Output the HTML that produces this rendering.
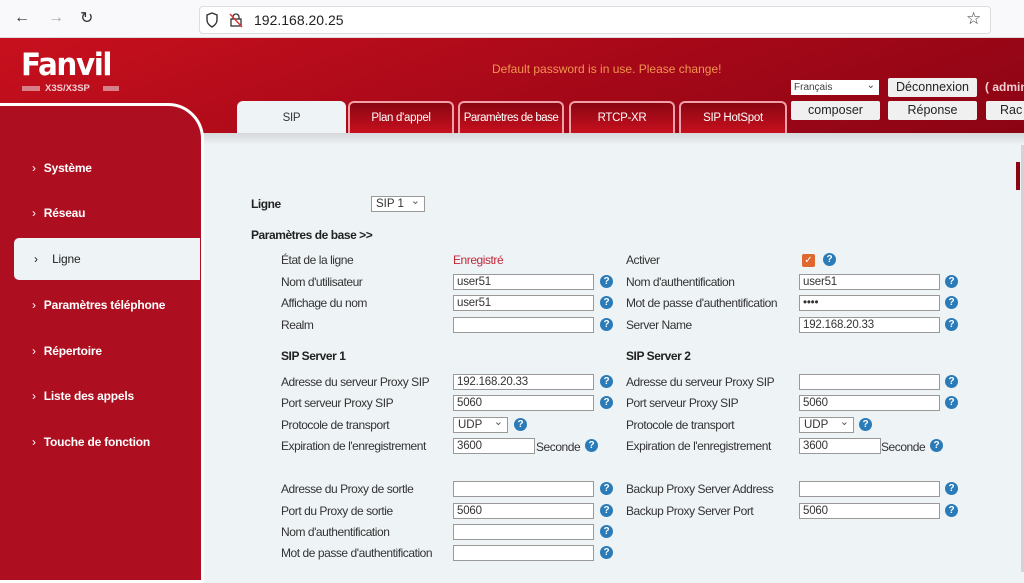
<!DOCTYPE html>
<html><head><meta charset="utf-8"><style>
*{margin:0;padding:0;box-sizing:border-box}
body{width:1024px;height:572px;overflow:hidden;position:relative;font-family:"Liberation Sans",sans-serif;background:#eef3f6}
.a{position:absolute;white-space:nowrap}
.l{position:absolute;font-size:12px;color:#333;letter-spacing:-0.45px;white-space:nowrap}
.in{position:absolute;height:16px;width:141px;background:#fff;border:1px solid #999;font-size:11.5px;color:#333;padding-left:3px;line-height:15px;letter-spacing:-0.2px}
.h{position:absolute;width:13px;height:13px;border-radius:50%;background:#2a7bb8;color:#fff;font-size:10px;font-weight:bold;text-align:center;line-height:13px}
.sel{position:absolute;height:16px;background:#fff;border:1px solid #999;font-size:11.5px;color:#333;padding-left:4px;line-height:14px}
.sel:after{content:"⌄";position:absolute;right:4px;top:-3px;font-size:11px;color:#555}
.tab{position:absolute;top:101px;height:32px;border:2px solid #f0a0a8;border-bottom:none;border-radius:6px 6px 0 0;background:linear-gradient(#8a0612,#c8101e);color:#fff;font-size:11.5px;text-align:center;line-height:30px;letter-spacing:-0.3px;white-space:nowrap;overflow:hidden}
.btn{position:absolute;height:19px;background:#f0f0f0;border-radius:2px;font-size:12.5px;color:#222;text-align:center;line-height:19px}
.nav{position:absolute;left:32px;color:#fff;font-size:12px;font-weight:bold;letter-spacing:-0.2px}
.nav b{font-weight:normal;margin-right:8px}
.b{font-weight:bold;color:#222}
</style></head><body>
<!-- browser bar -->
<div class="a" style="left:0;top:0;width:1024px;height:38px;background:#f9f9fb;border-bottom:1px solid #ddd"></div>
<div class="a" style="left:14px;top:9px;font-size:16px;color:#333">←</div>
<div class="a" style="left:48px;top:9px;font-size:16px;color:#aaa">→</div>
<div class="a" style="left:80px;top:8px;font-size:16px;color:#333">↻</div>
<div class="a" style="left:199px;top:6px;width:792px;height:28px;background:#fff;border:1px solid #ddd;border-radius:4px"></div>
<svg class="a" style="left:205px;top:12px" width="14" height="16" viewBox="0 0 14 16"><path d="M7 1L2 3v5c0 3 2.5 5.5 5 7 2.5-1.5 5-4 5-7V3z" fill="none" stroke="#333" stroke-width="1.4"/></svg>
<svg class="a" style="left:229px;top:12px" width="14" height="16" viewBox="0 0 14 16"><rect x="2" y="7" width="10" height="7" fill="none" stroke="#333" stroke-width="1.3"/><path d="M4 7V5a3 3 0 016 0v2" fill="none" stroke="#333" stroke-width="1.3"/><path d="M1 2l12 13" stroke="#d33" stroke-width="1.4"/></svg>
<div class="a" style="left:254px;top:12px;font-size:14px;color:#222">192.168.20.25</div>
<div class="a" style="left:966px;top:9px;font-size:17px;color:#333">☆</div>
<!-- header -->
<div class="a" style="left:0;top:38px;width:1024px;height:107px;background:linear-gradient(160deg,#c8101e 0%,#a50818 55%,#8a0414 100%)"></div>
<div class="a" style="left:21px;top:47px;font-size:31px;font-weight:bold;color:#fff;letter-spacing:-1.5px;font-family:'DejaVu Sans',sans-serif;transform:scaleX(0.95);transform-origin:left">Fanvil</div>
<div class="a" style="left:45px;top:83px;font-size:9.5px;font-weight:bold;color:#f2d0d4">X3S/X3SP</div>
<div class="a" style="left:22px;top:86px;width:18px;height:5px;background:#d67f88"></div>
<div class="a" style="left:103px;top:86px;width:16px;height:5px;background:#d67f88"></div>
<div class="a" style="left:492px;top:62px;font-size:12px;color:#f29450">Default password is in use. Please change!</div>
<div class="a" style="left:791px;top:80px;width:88px;height:15px;background:#fff;font-size:10px;color:#444;padding-left:3px;line-height:15px">Français<span style="position:absolute;right:4px;top:-2px">⌄</span></div>
<div class="btn" style="left:888px;top:78px;width:89px">Déconnexion</div>
<div class="a" style="left:985px;top:80px;font-size:12px;color:#f0d0d4;font-weight:bold">( admin</div>
<div class="btn" style="left:791px;top:101px;width:89px">composer</div>
<div class="btn" style="left:888px;top:101px;width:89px">Réponse</div>
<div class="btn" style="left:986px;top:101px;width:50px;text-align:left;padding-left:14px">Rac</div>
<div class="tab" style="left:237px;width:109px;background:#eef3f6;color:#333;border-color:#eef3f6">SIP</div>
<div class="tab" style="left:348px;width:106px">Plan d'appel</div>
<div class="tab" style="left:458px;width:106px;letter-spacing:-0.5px">Paramètres de base</div>
<div class="tab" style="left:569px;width:106px">RTCP-XR</div>
<div class="tab" style="left:679px;width:108px">SIP HotSpot</div>
<div class="a" style="left:203px;top:133px;width:821px;height:12px;background:linear-gradient(#d6d8da,#eef3f6)"></div>
<!-- sidebar -->
<div class="a" style="left:-4px;top:103px;width:208px;height:480px;background:#ae0f20;border:3px solid #fff;border-radius:0 36px 0 0"></div>
<div class="a" style="left:14px;top:238px;width:186px;height:42px;background:#eef3f6;border-radius:5px 0 0 5px"></div>
<div class="nav" style="top:161px"><b>›</b>Système</div>
<div class="nav" style="top:206px"><b>›</b>Réseau</div>
<div class="nav" style="top:252px;left:34px;color:#222;font-weight:normal"><b>›</b>&nbsp;&nbsp;Ligne</div>
<div class="nav" style="top:298px"><b>›</b>Paramètres téléphone</div>
<div class="nav" style="top:344px"><b>›</b>Répertoire</div>
<div class="nav" style="top:389px"><b>›</b>Liste des appels</div>
<div class="nav" style="top:435px"><b>›</b>Touche de fonction</div>
<div class="a" style="left:1016px;top:162px;width:4px;height:28px;background:#8a0414"></div>
<div class="a" style="left:1021px;top:145px;width:3px;height:427px;background:#d8d0d2"></div>
<!-- content -->
<div class="l b" style="left:251px;top:197px">Ligne</div>
<div class="sel" style="left:371px;top:196px;width:54px">SIP 1</div>
<div class="l b" style="left:251px;top:228px">Paramètres de base &gt;&gt;</div>

<div class="l" style="left:281px;top:253px">État de la ligne</div>
<div class="l" style="left:453px;top:253px;color:#c0283a">Enregistré</div>
<div class="l" style="left:281px;top:275px">Nom d'utilisateur</div><div class="in" style="left:453px;top:274px">user51</div><div class="h" style="left:600px;top:275px">?</div>
<div class="l" style="left:281px;top:296px">Affichage du nom</div><div class="in" style="left:453px;top:295px">user51</div><div class="h" style="left:600px;top:296px">?</div>
<div class="l" style="left:281px;top:318px">Realm</div><div class="in" style="left:453px;top:317px"></div><div class="h" style="left:600px;top:318px">?</div>

<div class="l" style="left:626px;top:253px">Activer</div>
<div class="a" style="left:802px;top:254px;width:13px;height:13px;background:#e0672e;border-radius:2px;color:#fff;font-size:10px;text-align:center;line-height:13px">✓</div><div class="h" style="left:823px;top:253px">?</div>
<div class="l" style="left:626px;top:275px">Nom d'authentification</div><div class="in" style="left:799px;top:274px">user51</div><div class="h" style="left:945px;top:275px">?</div>
<div class="l" style="left:626px;top:296px">Mot de passe d'authentification</div><div class="in" style="left:799px;top:295px">••••</div><div class="h" style="left:945px;top:296px">?</div>
<div class="l" style="left:626px;top:318px">Server Name</div><div class="in" style="left:799px;top:317px">192.168.20.33</div><div class="h" style="left:945px;top:318px">?</div>

<div class="l b" style="left:281px;top:349px">SIP Server 1</div>
<div class="l b" style="left:626px;top:349px">SIP Server 2</div>

<div class="l" style="left:281px;top:375px">Adresse du serveur Proxy SIP</div><div class="in" style="left:453px;top:374px">192.168.20.33</div><div class="h" style="left:600px;top:375px">?</div>
<div class="l" style="left:281px;top:396px">Port serveur Proxy SIP</div><div class="in" style="left:453px;top:395px">5060</div><div class="h" style="left:600px;top:396px">?</div>
<div class="l" style="left:281px;top:418px">Protocole de transport</div><div class="sel" style="left:453px;top:417px;width:55px">UDP</div><div class="h" style="left:514px;top:418px">?</div>
<div class="l" style="left:281px;top:439px">Expiration de l'enregistrement</div><div class="in" style="left:453px;top:438px;width:82px">3600</div><div class="l" style="left:536px;top:440px">Seconde</div><div class="h" style="left:585px;top:439px">?</div>

<div class="l" style="left:626px;top:375px">Adresse du serveur Proxy SIP</div><div class="in" style="left:799px;top:374px"></div><div class="h" style="left:945px;top:375px">?</div>
<div class="l" style="left:626px;top:396px">Port serveur Proxy SIP</div><div class="in" style="left:799px;top:395px">5060</div><div class="h" style="left:945px;top:396px">?</div>
<div class="l" style="left:626px;top:418px">Protocole de transport</div><div class="sel" style="left:799px;top:417px;width:55px">UDP</div><div class="h" style="left:859px;top:418px">?</div>
<div class="l" style="left:626px;top:439px">Expiration de l'enregistrement</div><div class="in" style="left:799px;top:438px;width:82px">3600</div><div class="l" style="left:881px;top:440px">Seconde</div><div class="h" style="left:930px;top:439px">?</div>

<div class="l" style="left:281px;top:482px">Adresse du Proxy de sortle</div><div class="in" style="left:453px;top:481px"></div><div class="h" style="left:600px;top:482px">?</div>
<div class="l" style="left:281px;top:504px">Port du Proxy de sortie</div><div class="in" style="left:453px;top:503px">5060</div><div class="h" style="left:600px;top:504px">?</div>
<div class="l" style="left:281px;top:525px">Nom d'authentification</div><div class="in" style="left:453px;top:524px"></div><div class="h" style="left:600px;top:525px">?</div>
<div class="l" style="left:281px;top:546px">Mot de passe d'authentification</div><div class="in" style="left:453px;top:545px"></div><div class="h" style="left:600px;top:546px">?</div>

<div class="l" style="left:626px;top:482px">Backup Proxy Server Address</div><div class="in" style="left:799px;top:481px"></div><div class="h" style="left:945px;top:482px">?</div>
<div class="l" style="left:626px;top:504px">Backup Proxy Server Port</div><div class="in" style="left:799px;top:503px">5060</div><div class="h" style="left:945px;top:504px">?</div>
</body></html>
